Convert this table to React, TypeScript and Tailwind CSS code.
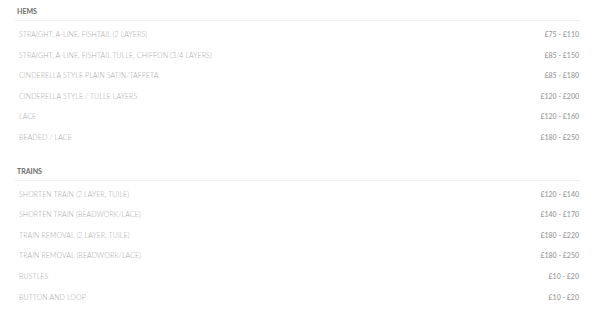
const sections = [
  {
    title: 'HEMS',
    rows: [
      ['STRAIGHT, A-LINE, FISHTAIL (2 LAYERS)', '£75 - £110'],
      ['STRAIGHT, A-LINE, FISHTAIL TULLE, CHIFFON (3/4 LAYERS)', '£85 - £150'],
      ['CINDERELLA STYLE PLAIN SATIN/TAFFETA', '£85 - £180'],
      ['CINDERELLA STYLE / TULLE LAYERS', '£120 - £200'],
      ['LACE', '£120 - £160'],
      ['BEADED / LACE', '£180 - £250'],
    ],
  },
  {
    title: 'TRAINS',
    rows: [
      ['SHORTEN TRAIN (2 LAYER, TUILE)', '£120 - £140'],
      ['SHORTEN TRAIN (BEADWORK/LACE)', '£140 - £170'],
      ['TRAIN REMOVAL (2 LAYER, TUILE)', '£180 - £220'],
      ['TRAIN REMOVAL (BEADWORK/LACE)', '£180 - £250'],
      ['BUSTLES', '£10 - £20'],
      ['BUTTON AND LOOP', '£10 - £20'],
    ],
  },
]

export default function App() {
  return (
    <div className="w-[602px] h-[312px] bg-white pt-[2px] pl-[15px] pr-[22px] font-['Lato',sans-serif]">
      {sections.map((s, i) => (
        <div key={s.title} className={i > 0 ? 'mt-[14px]' : ''}>
          <div className="h-[19px] flex items-center pl-[2px] pt-px text-[7px] font-bold text-[#6a6a6a] border-b border-[#f6efef]">
            {s.title}
          </div>
          <div className="mt-[3px]">
            {s.rows.map(([name, price]) => (
              <div key={name} className="h-[20.6px] flex items-center justify-between pl-[4px] pr-[1px]">
                <span className="text-[7px] font-light text-[#a8a8a8] tracking-[0.1px]">{name}</span>
                <span className="text-[7px] font-semibold text-[#a0a0a0]">{price}</span>
              </div>
            ))}
          </div>
        </div>
      ))}
    </div>
  )
}
